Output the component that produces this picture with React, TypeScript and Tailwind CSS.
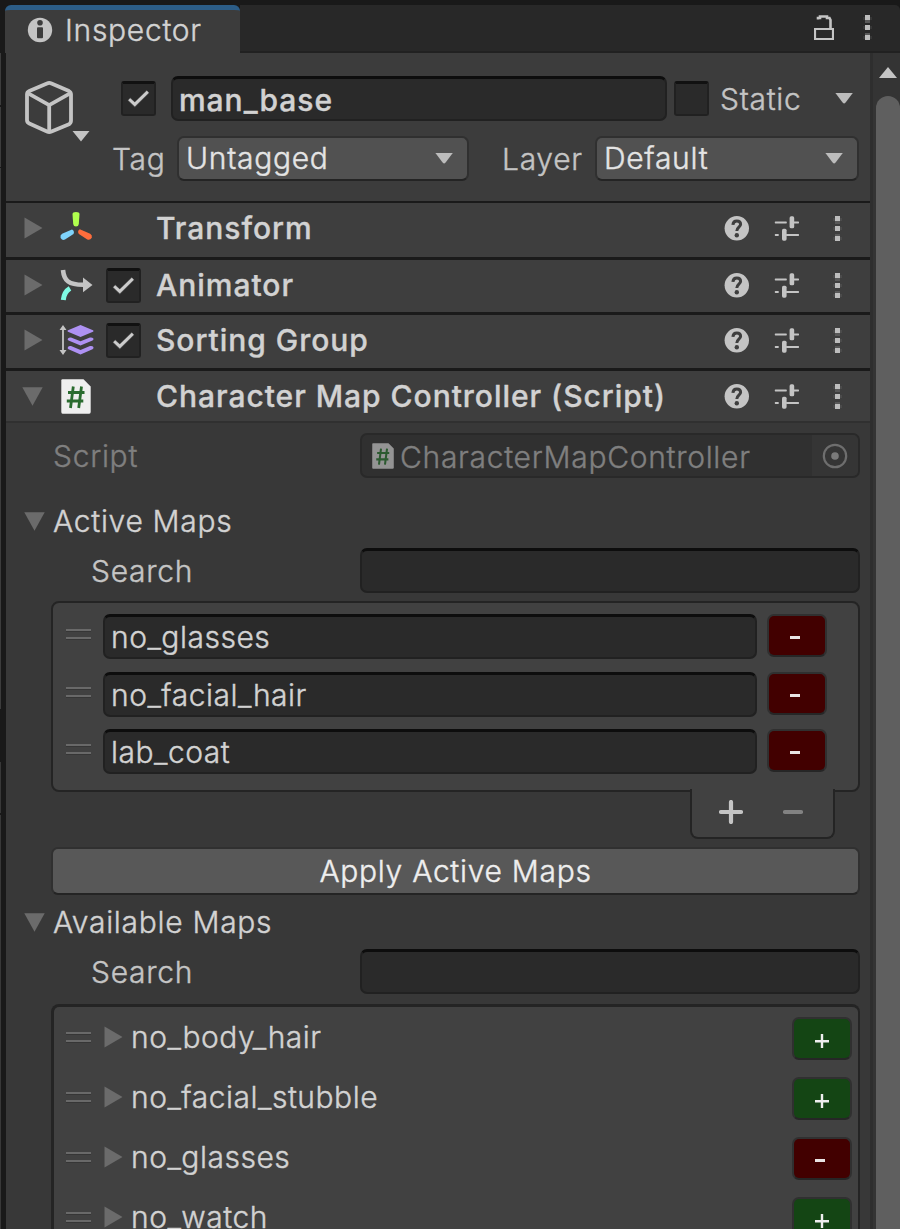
import React from "react";

type Tri = "right" | "down" | "small" | "up";

function Triangle({ kind, className = "" }: { kind: Tri; className?: string }) {
  if (kind === "right")
    return (
      <svg width="19" height="22" viewBox="0 0 19 22" className={`shrink-0 ${className}`}>
        <path d="M0.5 0.5L18.5 11L0.5 21.5Z" fill="#6b6b6b" />
      </svg>
    );
  if (kind === "down")
    return (
      <svg width="21" height="19" viewBox="0 0 21 19" className={`shrink-0 ${className}`}>
        <path d="M0.3 0.3H20.7L10.5 18.7Z" fill="#6b6b6b" />
      </svg>
    );
  if (kind === "up")
    return (
      <svg width="18" height="11" viewBox="0 0 18 11" className={`shrink-0 ${className}`}>
        <path d="M9 0L18 11H0Z" fill="#c4c4c4" />
      </svg>
    );
  return (
    <svg width="19" height="11" viewBox="0 0 19 11" className={`shrink-0 ${className}`}>
      <path d="M0.4 0H17.8L10.4 9.8Q9.1 11.4 7.8 9.8Z" fill="#bcbcbc" />
    </svg>
  );
}

function Dots({ className = "" }: { className?: string }) {
  return (
    <svg width="9" height="25" viewBox="0 0 9 25" className={`shrink-0 ${className}`}>
      <g fill="#ffffff" fillOpacity="0.07">
        <rect x="0" y="2" width="9" height="3" />
        <rect x="0" y="11" width="9" height="3" />
        <rect x="0" y="21" width="9" height="3" />
      </g>
      <g fill="#585858">
        <rect x="2" y="5" width="5" height="3" />
        <rect x="2" y="18" width="5" height="2" />
      </g>
      <g fill="#bdbdbd">
        <rect x="2" y="0" width="5" height="5" />
        <rect x="2" y="10" width="5" height="5" />
        <rect x="2" y="20" width="5" height="5" />
      </g>
    </svg>
  );
}

function Checkbox({ checked, className = "" }: { checked?: boolean; className?: string }) {
  return (
    <div
      className={`flex h-[35px] w-[35px] shrink-0 items-center justify-center rounded-[3px] border-2 border-t-[3px] border-[#212121] border-t-[#111111] bg-[#2a2a2a] ${className}`}
    >
      {checked && (
        <svg width="23" height="19" viewBox="0 0 23 19" fill="none" className="-mt-px">
          <path d="M2 10L7.800 15.600L21 2.500" stroke="#777777" strokeWidth="4" strokeOpacity="0.5" />
          <path d="M2.200 10.200L7.800 15.400L20.800 2.700" stroke="#cccccc" strokeWidth="2.900" />
        </svg>
      )}
    </div>
  );
}

function TextField({ children, className = "" }: { children?: React.ReactNode; className?: string }) {
  return (
    <div
      className={`flex h-[45px] shrink-0 items-center rounded-[7px] border-2 border-t-[3px] border-[#212121] border-t-[#0d0d0d] bg-[#2a2a2a] pl-[6px] ${className}`}
    >
      {children}
    </div>
  );
}

function Dropdown({ label, className = "" }: { label: string; className?: string }) {
  return (
    <div
      className={`flex h-[45px] shrink-0 items-center justify-between rounded-[7px] border-2 border-[#303030] border-b-[#242424] bg-[#515151] pr-[13px] pl-[7px] text-[#e4e4e4] ${className}`}
    >
      <span className="pb-0.5">{label}</span>
      <Triangle kind="small" className="mb-px" />
    </div>
  );
}

function Help() {
  return (
    <svg width="25" height="25" viewBox="0 0 25 25" className="shrink-0">
      <circle cx="12.8" cy="12.3" r="12.2" fill="#c4c4c4" />
      <path
        d="M8.900 8.800C9.100 6.200 10.600 4.900 12.800 4.900C15.100 4.900 16.600 6.200 16.600 8.200C16.600 11.200 12.800 11.200 12.800 15"
        fill="none"
        stroke="#3e3e3e"
        strokeWidth="3"
      />
      <circle cx="12.8" cy="19.3" r="2.2" fill="#3e3e3e" />
    </svg>
  );
}

function Sliders() {
  return (
    <svg width="25" height="25" viewBox="0 0 25 25" className="shrink-0" fill="#c4c4c4">
      <rect x="0.8" y="5.4" width="12" height="2" rx="0.6" />
      <rect x="15.6" y="0.3" width="4.6" height="12" rx="1.6" />
      <rect x="19" y="5.4" width="6" height="2" rx="0.6" />
      <rect x="0.8" y="17.9" width="4" height="2" rx="0.6" />
      <rect x="8" y="12.7" width="4.6" height="12" rx="1.6" />
      <rect x="12" y="17.9" width="13" height="2" rx="0.6" />
    </svg>
  );
}

function TransformIcon() {
  return (
    <svg width="34" height="34" viewBox="0 0 34 34" className="shrink-0">
      <path d="M13.500 3Q13.500 1 17 1Q20.500 1 20.500 3L19.800 13Q19.500 15.600 17 15.600Q14.500 15.600 14.200 13Z" fill="#b0ff4e" />
      <path d="M13 18.500Q15.900 20 14.500 23L6 28.600Q3.300 29.800 1.600 27Q0.800 24.300 3.100 22.800Z" fill="#7fd3fb" />
      <path d="M20.800 18.200Q17.900 20 19.900 23L28.300 28.500Q31 29.600 32.800 26.800Q33.500 24.300 31.200 22.800Z" fill="#ff6d3c" />
    </svg>
  );
}

function AnimatorIcon() {
  return (
    <svg width="34" height="34" viewBox="0 0 34 34" className="shrink-0" fill="none">
      <path d="M4 2C5 13 10 16.800 24 16.800" stroke="#c4c4c4" strokeWidth="4.600" />
      <path d="M24 9.600L33.500 17L24 24.200Z" fill="#c4c4c4" />
      <path d="M4.300 32C4.800 27 6.500 23 11 20.400" stroke="#7ffbe3" strokeWidth="5" />
    </svg>
  );
}

function SortingIcon() {
  return (
    <svg width="36" height="32" viewBox="0 0 36 32" className="shrink-0">
      <path d="M4 4V28" stroke="#c4c4c4" strokeWidth="1.800" />
      <path d="M4 1L7.500 6H0.500ZM4 31L7.500 26H0.500Z" fill="#c4c4c4" />
      <g fill="#ae91f3">
        <path d="M21.500 1L34 6.300Q35.200 7 34 7.700L21.500 13L9 7.700Q7.800 7 9 6.300Z" />
        <path d="M9 14.500Q10 13.300 12 13.500L21.500 17.300L31 13.500Q33.500 13.300 34.400 14.500Q35 15.600 33.500 16.600L21.500 21.500L9.500 16.600Q8 15.600 9 14.500Z" />
        <path d="M9 23Q10 21.600 12 22L21.500 26L31 22Q33.500 21.600 34.400 23Q35 24.300 33.500 25.300L21.500 30.500L9.500 25.300Q8 24.300 9 23Z" />
      </g>
    </svg>
  );
}

function ScriptIcon({ dim }: { dim?: boolean }) {
  return (
    <svg
      width={dim ? 22 : 30}
      height={dim ? 26 : 35}
      viewBox="0 0 30 35"
      preserveAspectRatio="none"
      className={dim ? "shrink-0" : "ml-[2px] shrink-0"}
    >
      <path
        d="M1.500 0.300H22.500L29.700 7.500V33Q29.700 34.700 28.200 34.700H1.500Q0.300 34.700 0.300 33V1.500Q0.300 0.300 1.500 0.300Z"
        fill={dim ? "#949494" : "#efefef"}
      />
      <path
        d="M12.300 7.500L9.500 29M20.500 7.500L17.700 29M7 13.500H23.500M5.800 22H22.300"
        stroke={dim ? "#2c5a30" : "#2a6b2f"}
        strokeWidth="2.800"
        fill="none"
      />
    </svg>
  );
}

function ComponentHeader({
  title,
  icon,
  open,
  checkbox,
  className,
}: {
  title: string;
  icon: React.ReactNode;
  open?: boolean;
  checkbox?: boolean;
  className: string;
}) {
  return (
    <div className={`flex shrink-0 items-center bg-[#3e3e3e] ${className}`}>
      <div className="flex w-[53px] items-center pl-4">
        {open ? <Triangle kind="down" /> : <Triangle kind="right" className="ml-[2px]" />}
      </div>
      <div className="flex w-[47px] items-center">{icon}</div>
      <div className="w-[50px]">{checkbox && <Checkbox checked />}</div>
      <span className="flex-1 font-medium tracking-[0.97px] text-[#d2d2d2] [-webkit-text-stroke:0.35px]">{title}</span>
      <div className="flex items-center pr-[28px]">
        <Help />
        <div className="ml-[25px]">
          <Sliders />
        </div>
        <Dots className="ml-[34px]" />
      </div>
    </div>
  );
}

function Handle() {
  return (
    <div className="flex w-[25px] shrink-0 flex-col gap-[5px]">
      <div className="h-[3px] border-t-2 border-[#696969] bg-[#363636]" />
      <div className="h-[3px] border-t-2 border-[#696969] bg-[#363636]" />
    </div>
  );
}

function ColorButton({ plus, className = "" }: { plus?: boolean; className?: string }) {
  return (
    <div
      className={`flex h-[43px] w-[60px] shrink-0 items-center justify-center rounded-[7px] border-2 border-[#303030] border-b-[#262626] ${plus ? "bg-[#144514]" : "bg-[#420000]"} ${className}`}
    >
      {plus ? (
        <svg width="14" height="14" viewBox="0 0 14 14" className="mt-[5px]">
          <path d="M7 0V14M0 7.200H14" stroke="#eeeeee" strokeWidth="2.400" />
        </svg>
      ) : (
        <svg width="10" height="3" viewBox="0 0 10 3" className="mt-1 mr-[5px]">
          <rect width="10" height="3" fill="#e8e4e4" />
        </svg>
      )}
    </div>
  );
}

function Foldout({ title, className = "" }: { title: string; className?: string }) {
  return (
    <div className={`flex h-[30px] shrink-0 items-center pl-[18px] ${className}`}>
      <Triangle kind="down" className="mr-[8px]" />
      <span className="text-[#d2d2d2]">{title}</span>
    </div>
  );
}

function SearchRow({ className = "" }: { className?: string }) {
  return (
    <div className={`flex h-[45px] shrink-0 items-center pl-[85px] ${className}`}>
      <span className="w-[269px] pt-px">Search</span>
      <TextField className="w-[500px]" />
    </div>
  );
}

const available = [
  { name: "no_body_hair", plus: true },
  { name: "no_facial_stubble", plus: true },
  { name: "no_glasses", plus: false },
  { name: "no_watch", plus: true },
];

const activeMaps = [
  { name: "no_glasses", gap: "mt-0" },
  { name: "no_facial_hair", gap: "mt-[13px]" },
  { name: "lab_coat", gap: "mt-3" },
];

export default function App() {
  return (
    <div className="flex h-[1229px] w-[900px] overflow-hidden bg-[#191919] font-['Inter',sans-serif] text-[30px] leading-[30px] font-light tracking-[0.7px] whitespace-nowrap text-[#c4c4c4] [-webkit-text-stroke:0.4px]">
      <div className="flex w-px shrink-0 flex-col">
        <div className="h-[53px]" />
        <div className="h-[52px] bg-[#3c3c3c]" />
        <div className="h-[2px]" />
        <div className="h-[60px] bg-[#3c3c3c]" />
        <div className="h-px" />
        <div className="h-[541px] bg-[#3c3c3c]" />
        <div className="h-[53px]" />
        <div className="h-[51px] bg-[#383838]" />
        <div className="h-[2px]" />
        <div className="flex-1 bg-[#383838]" />
      </div>

      <div className="flex flex-1 flex-col pt-[5px]">
        <div className="ml-1 flex h-12 shrink-0">
          <div className="flex w-[235px] items-center rounded-t-[6px] border-t-[5px] border-[#2c5d87] bg-[#3c3c3c] pl-[22px]">
            <svg width="26" height="26" viewBox="0 0 26 26" className="mb-[3px] shrink-0">
              <circle cx="13" cy="13" r="12.200" fill="#c4c4c4" />
              <circle cx="13" cy="5.700" r="2.800" fill="#3c3c3c" />
              <rect x="10" y="10.200" width="6" height="11" rx="1" fill="#3c3c3c" />
            </svg>
            <span className="ml-3 pb-[3px] text-[#d2d2d2]">Inspector</span>
          </div>
          <div className="flex flex-1 items-start justify-end rounded-tr-[5px] border-b-2 border-[#212121] bg-[#282828] pt-[10px] pr-7">
            <svg width="20" height="25" viewBox="0 0 20 25" className="shrink-0" fill="none" stroke="#c4c4c4">
              <path d="M1 14H19V24H1Z" strokeWidth="2.200" />
              <path d="M4 4.500V3H6V1.500H13V3H15.500L16.500 5V13" strokeWidth="2.600" />
            </svg>
            <Dots className="ml-[29px]" />
          </div>
        </div>

        <div className="flex flex-1 pl-[5px]">
          <div className="flex w-[864px] shrink-0 flex-col bg-[#383838]">
            <div className="flex h-[148px] shrink-0 bg-[#3c3c3c] pt-[23px]">
              <svg width="70" height="66" viewBox="0 0 70 66" className="mt-1 ml-4 shrink-0" fill="none">
                <g stroke="#c4c4c4" strokeWidth="3.800" strokeLinejoin="round" transform="translate(0 0.600)">
                  <path d="M25 2.800Q27.200 1.800 29.500 2.800L47 10.500Q49 11.500 49 14V40Q49 42.500 47 43.700L29.500 51Q27.200 52 25 51L7.300 43Q5 42 5 39.500V14Q5 11.500 7.300 10.500Z" />
                  <path d="M5.800 12.500L27.200 24.500L48.500 12.500M27.200 24.500V51" />
                </g>
                <path d="M50.500 51H67.500L59 61.500Z" fill="#c4c4c4" />
              </svg>
              <div className="flex flex-col gap-[15px]">
                <div className="flex h-[45px] items-center">
                  <Checkbox checked className="ml-[29px]" />
                  <TextField className="ml-[15px] w-[496px]">
                    <span className="pt-px font-medium tracking-[0.97px] text-[#d2d2d2]">man_base</span>
                  </TextField>
                  <Checkbox className="ml-[7px]" />
                  <span className="ml-[11px] w-[115px]">Static</span>
                  <Triangle kind="small" />
                </div>
                <div className="flex h-[45px] items-center">
                  <span className="ml-5 w-[65px] pt-px">Tag</span>
                  <Dropdown label="Untagged" className="w-[292px]" />
                  <span className="ml-[33px] w-[93px] pt-px">Layer</span>
                  <Dropdown label="Default" className="w-[264px]" />
                </div>
              </div>
            </div>

            <div className="flex shrink-0 flex-col bg-[#1a1a1a] pt-[2px]">
              <ComponentHeader title="Transform" icon={<TransformIcon />} className="mb-[3px] h-[54px] pb-1" />
              <ComponentHeader title="Animator" icon={<AnimatorIcon />} checkbox className="mb-[3px] h-[52px] pb-[2px]" />
              <ComponentHeader title="Sorting Group" icon={<SortingIcon />} checkbox className="mb-[3px] h-[53px] pb-[3px]" />
              <ComponentHeader title="Character Map Controller (Script)" icon={<ScriptIcon />} open className="h-[50px]" />
            </div>
            <div className="h-[2px] shrink-0 bg-[#303030]" />

            <div className="mt-[10px] flex h-[45px] shrink-0 items-center pl-[47px]">
              <span className="w-[307px] pt-px text-[#7f7f7f]">Script</span>
              <div className="flex h-[45px] w-[500px] items-center overflow-hidden rounded-[7px] border-2 border-[#292929] bg-[#303030] pl-[10px] text-[#7f7f7f]">
                <ScriptIcon dim />
                <span className="ml-[6px] flex-1 pt-[2px]">CharacterMapController</span>
                <div className="flex h-full w-[46px] items-center justify-center bg-[#353535]">
                  <svg width="26" height="26" viewBox="0 0 26 26">
                    <circle cx="13" cy="13" r="11.200" fill="none" stroke="#6e6e6e" strokeWidth="2.200" />
                    <circle cx="13" cy="13" r="3.800" fill="#7a7a7a" />
                  </svg>
                </div>
              </div>
            </div>

            <Foldout title="Active Maps" className="mt-7" />
            <SearchRow className="mt-3" />

            <div className="mt-2 ml-[45px] flex h-[191px] w-[809px] shrink-0 flex-col rounded-[8px] border-2 border-[#242424] bg-[#414141] pt-[11px] pl-[13px]">
              {activeMaps.map((m) => (
                <div key={m.name} className={`flex items-start ${m.gap}`}>
                  <div className="pt-[15px]">
                    <Handle />
                  </div>
                  <TextField className="ml-3 w-[654px] tracking-[0.5px] text-[#d2d2d2]">{m.name}</TextField>
                  <ColorButton className="ml-[10px]" />
                </div>
              ))}
            </div>
            <div className="relative -mt-[3px] ml-[684px] flex h-[50px] w-[145px] shrink-0 items-start rounded-b-[8px] border-2 border-t-0 border-[#242424] bg-[#414141] pt-[11px] pl-[27px]">
              <svg width="24" height="24" viewBox="0 0 24 24">
                <path d="M12 2V22M2 12H22" stroke="#c4c4c4" strokeWidth="4.200" strokeLinecap="round" />
              </svg>
              <svg width="20" height="24" viewBox="0 0 20 24" className="ml-10">
                <path d="M2 12H18" stroke="#828282" strokeWidth="4.200" strokeLinecap="round" />
              </svg>
            </div>

            <div className="mt-2 ml-[45px] flex h-[48px] w-[809px] shrink-0 items-center justify-center rounded-[7px] border-2 border-[#303030] border-b-[#242424] bg-[#585858] text-[#eeeeee]">
              Apply Active Maps
            </div>

            <Foldout title="Available Maps" className="mt-3" />
            <SearchRow className="mt-3" />

            <div className="mt-[10px] ml-[45px] flex h-[240px] w-[809px] shrink-0 flex-col rounded-t-[8px] border-x-[3px] border-t-[3px] border-r-2 border-[#242424] bg-[#414141]">
              {available.map((m) => (
                <div key={m.name} className="flex h-[60px] shrink-0 items-start pt-[10px] pl-3">
                  <div className="pt-[15px]">
                    <Handle />
                  </div>
                  <Triangle kind="right" className="mt-[9px] ml-[13px]" />
                  <span className="ml-[8px] w-[661px] pt-[5px] tracking-[0.5px] text-[#d2d2d2]">{m.name}</span>
                  <ColorButton plus={m.plus} />
                </div>
              ))}
            </div>
          </div>

          <div className="flex flex-1 flex-col border-l-[3px] border-[#2e2e2e] bg-[#343434] pl-[3px]">
            <Triangle kind="up" className="mt-[14px] ml-[3px]" />
            <div className="mt-[18px] flex-1 rounded-t-[12px] bg-[#5f5f5f]" />
          </div>
        </div>
      </div>
    </div>
  );
}
